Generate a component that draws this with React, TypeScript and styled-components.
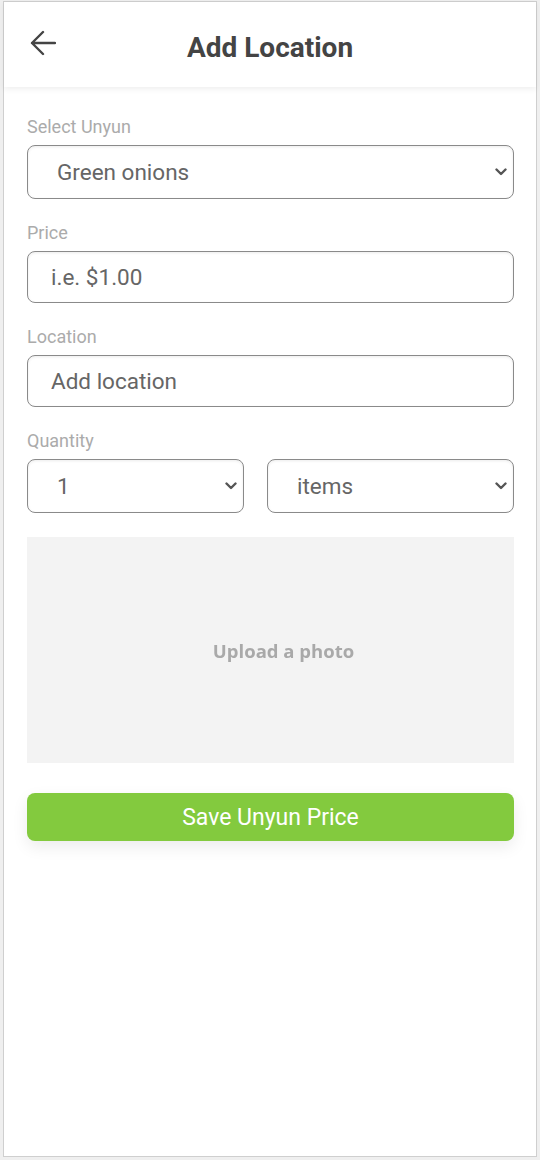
import React from "react";
import styled, { createGlobalStyle } from "styled-components";

const Global = createGlobalStyle`
  html, body { margin: 0; padding: 0; background: #efefef; }
  body { font-family: Roboto, "Liberation Sans", Arial, sans-serif; }
  * { box-sizing: border-box; }
`;

const Frame = styled.div`
  margin: 1px 3px 0 3px;
  height: 1156px;
  background: #fff;
  border: 1px solid #cfcfcf;
  display: flex;
  flex-direction: column;
`;

const Header = styled.header`
  height: 85px;
  position: relative;
  display: flex;
  align-items: center;
  justify-content: center;
  background: #fff;
  box-shadow: 0 2px 6px rgba(0, 0, 0, 0.07);
`;

const BackButton = styled.button`
  position: absolute;
  left: 20px;
  top: 25px;
  width: 32px;
  height: 32px;
  padding: 0;
  border: none;
  background: transparent;
  display: flex;
  align-items: center;
  justify-content: center;
`;

const Title = styled.h1`
  margin: 0;
  font-size: 28px;
  font-weight: 700;
  color: #444;
  padding-top: 6px;
`;

const Form = styled.form`
  padding: 30px 22px 0 23px;
  display: flex;
  flex-direction: column;
  gap: 24px;
`;

const Field = styled.div`
  display: flex;
  flex-direction: column;
  gap: 8px;
`;

const Label = styled.label`
  font-size: 18px;
  line-height: 20px;
  color: #ababab;
`;

const Row = styled.div`
  display: grid;
  grid-template-columns: 217fr 247fr;
  gap: 23px;
`;

const SelectWrap = styled.div`
  position: relative;
`;

const Select = styled.select`
  appearance: none;
  -webkit-appearance: none;
  width: 100%;
  height: 54px;
  padding: 0 40px 0 29px;
  border: 1px solid #8a8a8a;
  border-radius: 8px;
  background: #fff;
  box-shadow: inset 0 1px 3px rgba(0, 0, 0, 0.08);
  font-family: Roboto, "Liberation Sans", Arial, sans-serif;
  font-size: 22.5px;
  color: #666;
  outline: none;
`;

const Chevron = styled.svg`
  position: absolute;
  right: 7px;
  top: 50%;
  margin-top: -4px;
  pointer-events: none;
`;

const Input = styled.input`
  width: 100%;
  height: 52px;
  padding: 0 23px;
  border: 1px solid #8a8a8a;
  border-radius: 8px;
  background: #fff;
  box-shadow: inset 0 1px 3px rgba(0, 0, 0, 0.08);
  font-family: Roboto, "Liberation Sans", Arial, sans-serif;
  font-size: 22.5px;
  color: #666;
  outline: none;
  &::placeholder { color: #666; }
`;

const Upload = styled.div`
  height: 226px;
  background: #f3f3f3;
  display: flex;
  align-items: center;
  justify-content: center;
`;

const UploadText = styled.span`
  font-family: "Open Sans", Lato, sans-serif;
  font-weight: 700;
  font-size: 18.5px;
  color: #a9a9a9;
  filter: blur(0.5px);
  margin-left: 26px;
`;

const SaveButton = styled.button`
  margin-top: 6px;
  height: 48px;
  border: none;
  border-radius: 8px;
  background: #83ca3e;
  color: #fff;
  font-family: Roboto, "Liberation Sans", Arial, sans-serif;
  font-size: 23px;
  box-shadow: 0 6px 16px rgba(0, 0, 0, 0.08);
`;

const ChevronIcon = () => (
  <Chevron width="12" height="8" viewBox="0 0 12 8">
    <path d="M1.5 1.5 L6 6 L10.5 1.5" fill="none" stroke="#555" strokeWidth="2.4" strokeLinecap="round" strokeLinejoin="round" />
  </Chevron>
);

const Dropdown: React.FC<{ value: string; options: string[] }> = ({ value, options }) => (
  <SelectWrap>
    <Select defaultValue={value}>
      {options.map((o) => (
        <option key={o} value={o}>{o}</option>
      ))}
    </Select>
    <ChevronIcon />
  </SelectWrap>
);

export default function App() {
  return (
    <>
      <Global />
      <Frame>
        <Header>
          <BackButton type="button" aria-label="Back">
            <svg width="32" height="32" viewBox="0 0 32 32">
              <path d="M8 16 H31 M19 5 L8 16 L19 27" fill="none" stroke="#444" strokeWidth="2.4" strokeLinecap="round" strokeLinejoin="round" />
            </svg>
          </BackButton>
          <Title>Add Location</Title>
        </Header>
        <Form onSubmit={(e) => e.preventDefault()}>
          <Field>
            <Label>Select Unyun</Label>
            <Dropdown value="Green onions" options={["Green onions", "Red onions", "White onions"]} />
          </Field>
          <Field>
            <Label>Price</Label>
            <Input placeholder="i.e. $1.00" />
          </Field>
          <Field>
            <Label>Location</Label>
            <Input placeholder="Add location" />
          </Field>
          <Field>
            <Label>Quantity</Label>
            <Row>
              <Dropdown value="1" options={["1", "2", "3", "4", "5"]} />
              <Dropdown value="items" options={["items", "lbs", "kg"]} />
            </Row>
          </Field>
          <Upload>
            <UploadText>Upload a photo</UploadText>
          </Upload>
          <SaveButton type="submit">Save Unyun Price</SaveButton>
        </Form>
      </Frame>
    </>
  );
}
